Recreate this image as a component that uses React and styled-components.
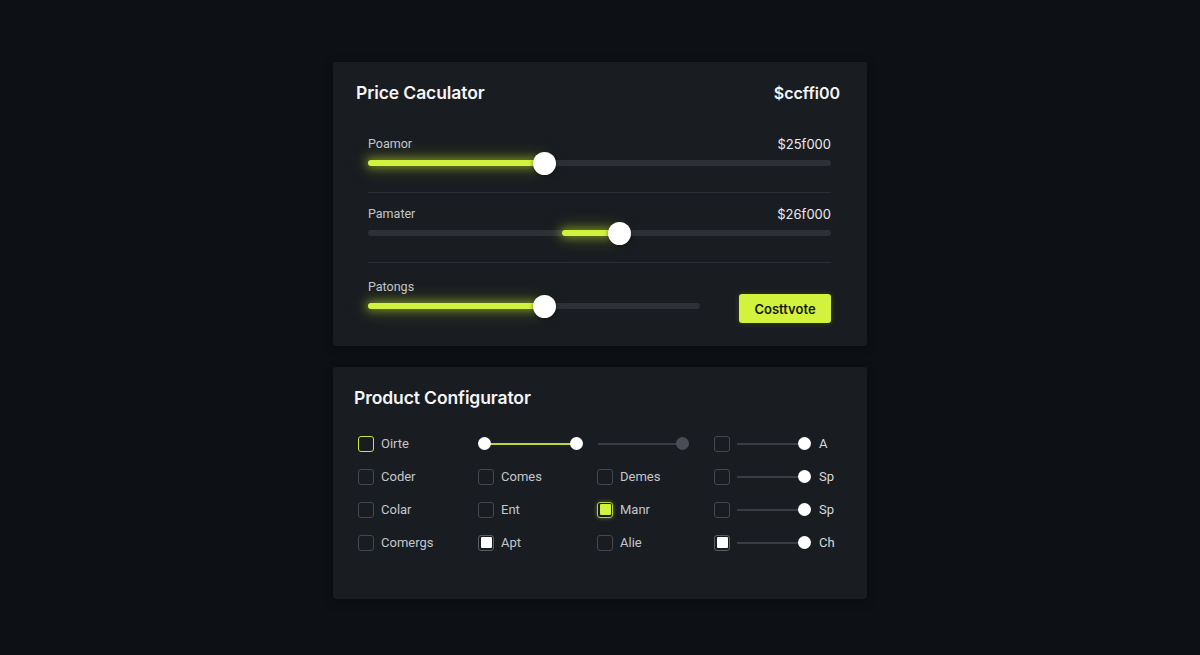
import React from "react";
import styled, { createGlobalStyle } from "styled-components";

const lime = "#d3f23e";

const Global = createGlobalStyle`
  html, body {
    margin: 0;
    padding: 0;
    background: #0d1015;
    font-family: Inter, "Noto Sans", sans-serif;
    color: #e8eaed;
  }
`;

const Page = styled.div`
  display: flex;
  flex-direction: column;
  align-items: center;
  gap: 21px;
  padding-top: 62px;
  min-height: 655px;
  box-sizing: border-box;
`;

const Card = styled.section`
  width: 534px;
  height: ${(p) => p.h}px;
  box-sizing: border-box;
  background: #191c21;
  border-radius: 3px;
  box-shadow: 0 2px 10px rgba(0, 0, 0, 0.35);
`;

const Header = styled.div`
  display: flex;
  justify-content: space-between;
  align-items: center;
  padding: 20px 27px 0 23px;
  height: 42px;
  box-sizing: border-box;
`;

const Title = styled.h2`
  margin: 0;
  font-size: 17.5px;
  font-weight: 600;
  line-height: 22px;
  color: #f4f5f7;
  letter-spacing: -0.1px;
`;

const Total = styled.span`
  font-size: 16px;
  font-weight: 600;
  color: #f4f5f7;
`;

const Sliders = styled.div`
  padding: 19px 36px 0 35px;
`;

const Row = styled.div`
  display: flex;
  align-items: flex-end;
  padding: ${(p) => (p.last ? "16px" : "13px")} 0 18px;
  border-bottom: ${(p) => (p.last ? "none" : "1px solid #2b2e34")};
`;

const RowMain = styled.div`
  flex: 1;
`;

const RowTop = styled.div`
  display: flex;
  justify-content: space-between;
  height: 16px;
  line-height: 16px;
`;

const Label = styled.span`
  font-family: Roboto, "Noto Sans", sans-serif;
  font-size: 12.5px;
  color: #c4c7cc;
`;

const Value = styled.span`
  font-size: 13px;
  color: #e9ebee;
`;

const TrackWrap = styled.div`
  position: relative;
  height: 22px;
  width: ${(p) => (p.w ? `${p.w}px` : "100%")};
  display: flex;
  align-items: center;
`;

const Track = styled.div`
  position: relative;
  width: 100%;
  height: 6px;
  border-radius: 3px;
  background: #2d3037;
`;

const Fill = styled.div`
  position: absolute;
  top: 0;
  height: 6px;
  border-radius: 3px;
  background: ${lime};
  box-shadow: 0 0 8px 2px rgba(200, 240, 40, 0.45), 0 0 18px 4px rgba(200, 240, 40, 0.18);
`;

const Thumb = styled.div`
  position: absolute;
  top: 50%;
  width: 23px;
  height: 23px;
  margin: -11.5px 0 0 -11.5px;
  border-radius: 50%;
  background: #fff;
  box-shadow: 0 1px 4px rgba(0, 0, 0, 0.5);
`;

const Button = styled.button`
  width: 94px;
  height: 29px;
  margin: 0 0 -6px 39px;
  border: none;
  border-radius: 3px;
  background: ${lime};
  color: #15170f;
  font-family: Inter, "Noto Sans", sans-serif;
  font-size: 13px;
  font-weight: 600;
  box-shadow: 0 0 6px rgba(200, 240, 40, 0.2);
`;

const ConfigHeader = styled.div`
  padding: 20px 21px 0;
  height: 42px;
  box-sizing: border-box;
  display: flex;
  align-items: center;
`;

const Grid = styled.div`
  display: grid;
  grid-template-columns: 120px 119px 117px 140px;
  grid-auto-rows: 33px;
  margin: 18px 0 0 25px;
  align-items: center;
`;

const Cell = styled.div`
  display: flex;
  align-items: center;
  gap: ${(p) => (p.tight ? 0 : 7)}px;
  height: 33px;
`;

const Box = styled.span`
  width: 16px;
  height: 16px;
  box-sizing: border-box;
  border-radius: 3px;
  flex: none;
  border: 1.5px solid ${(p) => (p.state === "on" ? "#c7e63a" : p.state === "white" ? "#5a5d64" : "#45484f")};
  display: flex;
  align-items: center;
  justify-content: center;
  &::after {
    content: "";
    display: ${(p) => (p.state === "fill" || p.state === "white" ? "block" : "none")};
    width: 11px;
    height: 11px;
    border-radius: 1px;
    background: ${(p) => (p.state === "fill" ? lime : "#fff")};
  }
  ${(p) => p.state === "fill" && `border-color: #b8d434; box-shadow: 0 0 4px rgba(200,240,40,0.4);`}
`;

const Text = styled.span`
  font-family: Roboto, "Noto Sans", sans-serif;
  font-size: 13px;
  color: #c4c7cc;
`;

const Mini = styled.div`
  position: relative;
  height: 14px;
  width: ${(p) => p.w}px;
  margin-left: ${(p) => p.ml || 0}px;
  flex: none;
  &::before {
    content: "";
    position: absolute;
    left: 0;
    right: 0;
    top: 6px;
    height: 2px;
    background: ${(p) => (p.active ? "#b9d83a" : "#3a3d44")};
  }
`;

const Dot = styled.span`
  position: absolute;
  top: 0;
  width: 13px;
  height: 13px;
  margin-left: -6.5px;
  border-radius: 50%;
  background: ${(p) => (p.muted ? "#4a4d55" : "#fff")};
`;

const MiniLabel = styled.span`
  font-family: Roboto, "Noto Sans", sans-serif;
  font-size: 13px;
  color: #d7d9dd;
  margin-left: 15px;
`;

const SliderRow = ({ label, value, from, to, w, children, last }) => (
  <Row last={last}>
    <RowMain>
      <RowTop>
        <Label>{label}</Label>
        {value && <Value>{value}</Value>}
      </RowTop>
      <TrackWrap w={w}>
        <Track>
          <Fill style={{ left: `${from}%`, width: `${to - from}%` }} />
          <Thumb style={{ left: `${to}%` }} />
        </Track>
      </TrackWrap>
    </RowMain>
    {children}
  </Row>
);

const Check = ({ state, label }) => (
  <Cell>
    <Box state={state} />
    <Text>{label}</Text>
  </Cell>
);

const Switchy = ({ state, label }) => (
  <Cell tight>
    <Box state={state} />
    <Mini w={67} ml={7}>
      <Dot style={{ left: "100%" }} />
    </Mini>
    <MiniLabel>{label}</MiniLabel>
  </Cell>
);

export default function App() {
  return (
    <>
      <Global />
      <Page>
        <Card h={284}>
          <Header>
            <Title>Price Caculator</Title>
            <Total>$ccffi00</Total>
          </Header>
          <Sliders>
            <SliderRow label="Poamor" value="$25f000" from={0} to={38.2} />
            <SliderRow label="Pamater" value="$26f000" from={41.9} to={54.4} />
            <SliderRow label="Patongs" from={0} to={53.3} w={332} last>
              <Button>Costtvote</Button>
            </SliderRow>
          </Sliders>
        </Card>
        <Card h={232}>
          <ConfigHeader>
            <Title>Product Configurator</Title>
          </ConfigHeader>
          <Grid>
            <Check state="on" label="Oirte" />
            <Cell>
              <Mini w={92} ml={6} active>
                <Dot style={{ left: 0 }} />
                <Dot style={{ left: "100%" }} />
              </Mini>
            </Cell>
            <Cell>
              <Mini w={84} ml={1}>
                <Dot muted style={{ left: "100%" }} />
              </Mini>
            </Cell>
            <Switchy state="off" label="A" />

            <Check state="off" label="Coder" />
            <Check state="off" label="Comes" />
            <Check state="off" label="Demes" />
            <Switchy state="off" label="Sp" />

            <Check state="off" label="Colar" />
            <Check state="off" label="Ent" />
            <Check state="fill" label="Manr" />
            <Switchy state="off" label="Sp" />

            <Check state="off" label="Comergs" />
            <Check state="white" label="Apt" />
            <Check state="off" label="Alie" />
            <Switchy state="white" label="Ch" />
          </Grid>
        </Card>
      </Page>
    </>
  );
}
